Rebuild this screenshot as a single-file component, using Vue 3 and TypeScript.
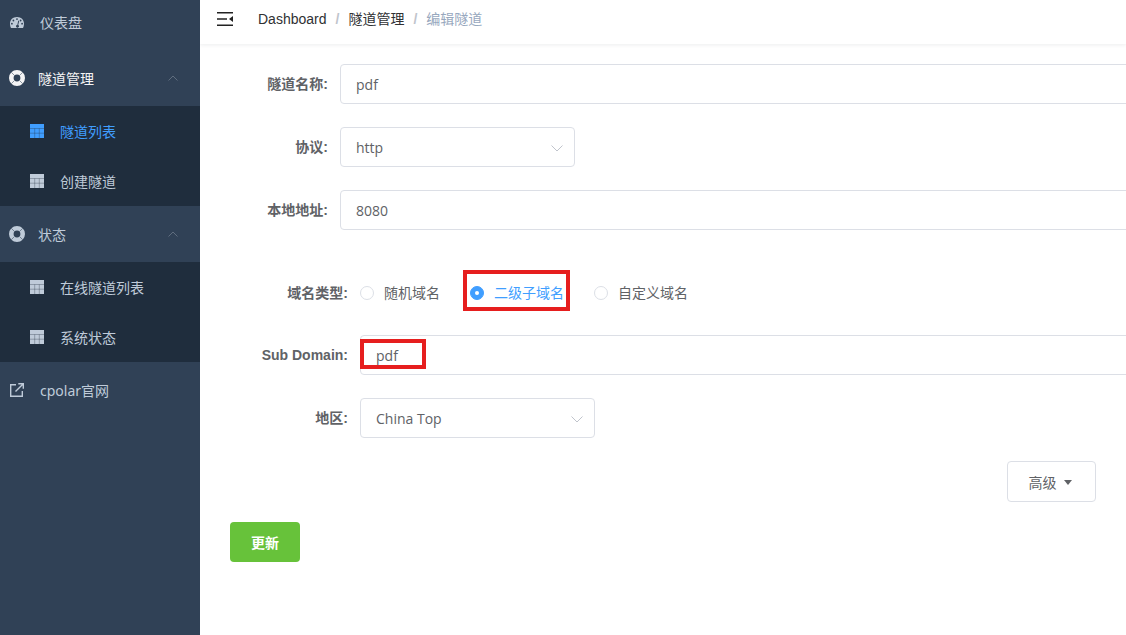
<script setup lang="ts">
const subGroups = {
  tunnels: [
    { label: '隧道列表', active: true },
    { label: '创建隧道', active: false },
  ],
  status: [
    { label: '在线隧道列表', active: false },
    { label: '系统状态', active: false },
  ],
};
</script>

<template>
  <div class="layout">
    <aside class="sidebar">
      <div class="menu-item first">
        <svg class="ic" viewBox="0 0 14 11" width="14" height="11"><path fill="currentColor" fill-rule="evenodd" d="M7 0C3 0 0 2.800 0 6.600 0 8.200.3 9.800 1 11h12c.7-1.200 1-2.800 1-4.400C14 2.800 11 0 7 0zM7 1.200a.9.900 0 1 1 0 1.800.9.900 0 0 1 0-1.800zM3.400 2.600a.9.900 0 1 1 0 1.800.9.900 0 0 1 0-1.800zM10.600 2.600a.9.900 0 1 1 0 1.800.9.900 0 0 1 0-1.800zM1.900 5.800a.9.900 0 1 1 0 1.800.9.900 0 0 1 0-1.800zM12.100 5.800a.9.900 0 1 1 0 1.800.9.900 0 0 1 0-1.800zM8.300 3.600l.9.300-1 4.200a1.400 1.400 0 1 1-.9-.2z"/></svg>
        <span class="t">仪表盘</span>
      </div>

      <div class="menu-item parent active-parent">
        <svg class="ic ring" viewBox="0 0 16 16" width="16" height="16"><circle cx="8" cy="8" r="5.700" fill="none" stroke="currentColor" stroke-width="4.600"/><path d="M2.200 2.200l3 3M13.800 2.200l-3 3M2.200 13.800l3-3M13.800 13.800l-3-3" stroke="#304156" stroke-opacity=".55" stroke-width="1"/></svg>
        <span class="t">隧道管理</span>
        <svg class="chev" viewBox="0 0 10 6" width="10" height="6"><path d="M.5 5.500 5 1l4.500 4.500" fill="none" stroke="currentColor"/></svg>
      </div>
      <div class="sub">
        <div v-for="s in subGroups.tunnels" :key="s.label" class="sub-item" :class="{ active: s.active }">
          <svg class="tbl" viewBox="0 0 14 14" width="14" height="14"><rect width="14" height="14" fill="currentColor"/><path d="M0 4.500H14M0 9.200H14M4.700 4.500V14M9.300 4.500V14" stroke="#1f2d3d" stroke-opacity=".4" stroke-width=".8"/></svg>
          <span class="t">{{ s.label }}</span>
        </div>
      </div>

      <div class="menu-item parent">
        <svg class="ic ring" viewBox="0 0 16 16" width="16" height="16"><circle cx="8" cy="8" r="5.700" fill="none" stroke="currentColor" stroke-width="4.600"/><path d="M2.200 2.200l3 3M13.800 2.200l-3 3M2.200 13.800l3-3M13.800 13.800l-3-3" stroke="#304156" stroke-opacity=".55" stroke-width="1"/></svg>
        <span class="t">状态</span>
        <svg class="chev" viewBox="0 0 10 6" width="10" height="6"><path d="M.5 5.500 5 1l4.500 4.500" fill="none" stroke="currentColor"/></svg>
      </div>
      <div class="sub">
        <div v-for="s in subGroups.status" :key="s.label" class="sub-item" :class="{ active: s.active }">
          <svg class="tbl" viewBox="0 0 14 14" width="14" height="14"><rect width="14" height="14" fill="currentColor"/><path d="M0 4.500H14M0 9.200H14M4.700 4.500V14M9.300 4.500V14" stroke="#1f2d3d" stroke-opacity=".4" stroke-width=".8"/></svg>
          <span class="t">{{ s.label }}</span>
        </div>
      </div>

      <div class="menu-item">
        <svg class="ic" viewBox="0 0 14 14" width="14" height="14"><path fill="none" stroke="currentColor" stroke-width="1.400" d="M6 1.700H.7v11.600h11.600V8M5.500 8.500 12.800 1.200M8.300.7h5v5"/></svg>
        <span class="t">cpolar官网</span>
      </div>
    </aside>

    <main class="main">
      <header class="navbar">
        <svg class="hamburger" viewBox="0 0 16 14" width="16" height="14"><path fill="#222" d="M0 0h16v1.400H0zM0 6.300h10V7.700H0zM0 12.600h16V14H0zM16 4v6l-4-3z"/></svg>
        <nav class="crumbs">
          <span class="c1">Dashboard</span>
          <span class="sep">/</span>
          <span class="c1 cjk">隧道管理</span>
          <span class="sep">/</span>
          <span class="c2 cjk">编辑隧道</span>
        </nav>
      </header>

      <section class="content">
        <form class="form" @submit.prevent>
          <div class="row">
            <label class="label cjk">隧道名称:</label>
            <div class="input wide">pdf</div>
          </div>
          <div class="row">
            <label class="label cjk">协议:</label>
            <div class="input select">http<svg class="down" viewBox="0 0 12 7" width="12" height="7"><path d="M.5.500 6 6 11.500.5" fill="none" stroke="#c0c4cc"/></svg></div>
          </div>
          <div class="row">
            <label class="label cjk">本地地址:</label>
            <div class="input wide">8080</div>
          </div>

          <div class="nested">
            <div class="row radio-row">
              <label class="label cjk">域名类型:</label>
              <div class="radios">
                <span class="radio"><i class="dot"></i><span class="cjk">随机域名</span></span>
                <span class="radio on"><i class="dot"></i><span class="cjk">二级子域名</span></span>
                <span class="radio"><i class="dot"></i><span class="cjk">自定义域名</span></span>
              </div>
              <span class="mark mark-radio"></span>
            </div>
            <div class="row">
              <label class="label">Sub Domain:</label>
              <div class="input wide">pdf</div>
              <span class="mark mark-sub"></span>
            </div>
            <div class="row">
              <label class="label cjk">地区:</label>
              <div class="input select">China Top<svg class="down" viewBox="0 0 12 7" width="12" height="7"><path d="M.5.500 6 6 11.500.5" fill="none" stroke="#c0c4cc"/></svg></div>
            </div>
          </div>

          <div class="adv-row">
            <button class="adv" type="button">高级<i class="caret"></i></button>
          </div>
          <button class="submit" type="button">更新</button>
        </form>
      </section>
    </main>
  </div>
</template>

<style>
html, body { margin: 0; overflow: hidden; background: #fff; }
</style>

<style scoped>
.layout {
  display: flex;
  width: 1126px;
  height: 635px;
  overflow: hidden;
  font-family: "Open Sans", "Noto Sans CJK SC", sans-serif;
  font-size: 14px;
}
.sidebar {
  flex: 0 0 200px;
  background: #304156;
  color: #bfcbd9;
  overflow: hidden;
}
.menu-item {
  height: 56px;
  display: flex;
  align-items: center;
  position: relative;
  padding-left: 10px;
  font-family: "Noto Sans", "Noto Sans CJK SC", sans-serif;
}
.menu-item.first { margin-top: -6px; }
.menu-item .ic { flex: none; margin-right: 16px; }
.menu-item.parent { padding-left: 9px; }
.menu-item.parent .ic { margin-right: 13px; }
.active-parent { color: #f4f4f5; }
.chev { position: absolute; right: 22px; top: 25px; color: #5f6d7e; }
.sub { background: #1f2d3d; }
.sub-item {
  height: 50px;
  display: flex;
  align-items: center;
  padding-left: 30px;
  font-family: "Noto Sans", "Noto Sans CJK SC", sans-serif;
}
.sub-item .tbl { flex: none; margin-right: 16px; }
.sub-item.active { color: #409eff; }

.main { flex: 1; min-width: 0; overflow: hidden; display: flex; flex-direction: column; }
.navbar {
  flex: 0 0 44px;
  display: flex;
  align-items: center;
  padding-left: 17px;
  padding-bottom: 6px;
  box-sizing: border-box;
  box-shadow: 0 1px 4px rgba(0, 21, 41, 0.08);
  position: relative;
}
.hamburger { margin-right: 25px; margin-top: -1px; }
.crumbs { display: flex; align-items: center; font-family: "Liberation Sans", "Noto Sans CJK SC", sans-serif; }
.crumbs .cjk { margin-bottom: 2px; }
.c1 { color: #303133; }
.c2 { color: #97a8be; }
.sep { color: #c0c4cc; margin: 0 9px; font-weight: 700; }

.content { padding: 20px 30px 0 30px; }
.form { width: 2000px; }
.row {
  display: flex;
  align-items: center;
  height: 40px;
  margin-bottom: 23px;
  position: relative;
}
.label {
  width: 98px;
  margin-right: 12px;
  text-align: right;
  font-weight: 700;
  color: #606266;
  flex: none;
  font-family: "Liberation Sans", "Noto Sans CJK SC", sans-serif;
}
.label.cjk { margin-bottom: 2px; }
.input {
  box-sizing: border-box;
  height: 40px;
  line-height: 40px;
  border: 1px solid #dcdfe6;
  border-radius: 4px;
  padding: 0 15px;
  color: #606266;
  position: relative;
  flex: none;
}
.wide { width: 1500px; }
.select { width: 235px; }
.down { position: absolute; right: 11px; top: 17px; }

.nested { padding-left: 20px; padding-top: 20px; }
.nested .radio-row { margin-bottom: 22px; }
.radios { display: flex; align-items: center; }
.radio { display: inline-flex; align-items: center; color: #606266; margin-right: 30px; }
.radio .cjk { margin-bottom: 2px; }
.dot {
  box-sizing: border-box;
  width: 14px;
  height: 14px;
  border: 1px solid #dcdfe6;
  border-radius: 50%;
  margin-right: 10px;
  background: #fff;
  position: relative;
}
.radio.on { color: #409eff; }
.radio.on .dot { background: #409eff; border-color: #409eff; }
.radio.on .dot::after {
  content: "";
  position: absolute;
  left: 4px;
  top: 4px;
  width: 4px;
  height: 4px;
  border-radius: 50%;
  background: #fff;
}
.mark { position: absolute; border: 4px solid #e61e1e; box-sizing: border-box; pointer-events: none; }
.mark-radio { left: 213px; top: -3px; width: 107px; height: 41px; }
.mark-sub { left: 110px; top: 4px; width: 66px; height: 30px; }

.adv-row { margin-left: 777px; }
.adv {
  box-sizing: border-box;
  width: 89px;
  height: 41px;
  border: 1px solid #dcdfe6;
  border-radius: 4px;
  background: #fff;
  color: #606266;
  font: inherit;
  padding: 0 3px 0 0;
  display: inline-flex;
  align-items: center;
  justify-content: center;
  vertical-align: top;
}
.caret {
  width: 0;
  height: 0;
  border-left: 4.5px solid transparent;
  border-right: 4.5px solid transparent;
  border-top: 5px solid #606266;
  margin-left: 7px;
  margin-top: 1px;
}
.submit {
  display: block;
  margin-top: 20px;
  width: 70px;
  height: 40px;
  border: 0;
  border-radius: 4px;
  background: #67c23a;
  color: #fff;
  font: inherit;
  font-weight: 700;
  padding: 0;
}
</style>
